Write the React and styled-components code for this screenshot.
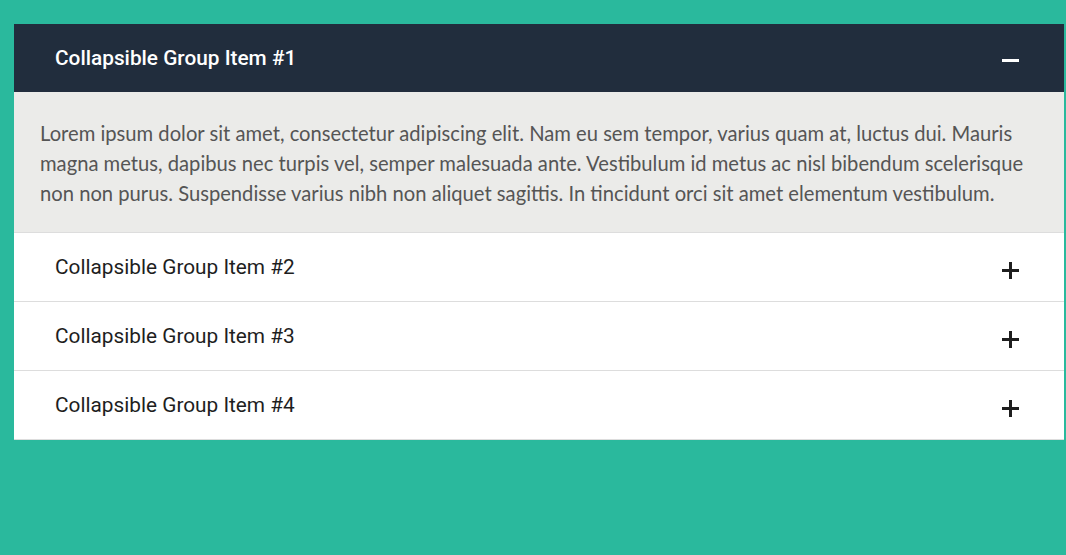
import { useState } from 'react';
import styled, { createGlobalStyle } from 'styled-components';

const GlobalStyle = createGlobalStyle`
    body {
        margin: 0;
        background-color: #2ab99d;
        font-family: Roboto, "Liberation Sans", sans-serif;
    }
`;

const Page = styled.div`
    padding: 24px 2px 0 14px;
`;

const Accordion = styled.div`
    background-color: #fff;
    border-bottom: 1px solid #ddd;
`;

const Item = styled.div`
    & + & {
        border-top: 1px solid #ddd;
    }
`;

const Header = styled.button`
    width: 100%;
    height: 68px;
    display: flex;
    align-items: center;
    justify-content: space-between;
    padding: 0 45px 0 41px;
    border: none;
    cursor: pointer;
    background-color: ${props => (props.open ? '#212d3d' : '#fff')};
    color: ${props => (props.open ? '#fff' : '#1e1e1e')};
    font-family: Roboto, "Liberation Sans", sans-serif;
    font-size: 20.8px;
    font-weight: ${props => (props.open ? 500 : 400)};
    text-align: left;
`;

const Icon = styled.span`
    position: relative;
    width: 17px;
    height: 17px;
    margin-top: ${props => (props.open ? '4px' : '6px')};

    &::before,
    &::after {
        content: '';
        position: absolute;
        background-color: currentColor;
    }

    &::before {
        left: 0;
        right: 0;
        top: 7px;
        height: 3px;
    }

    &::after {
        display: ${props => (props.open ? 'none' : 'block')};
        top: 0;
        bottom: 0;
        left: 7px;
        width: 3px;
    }
`;

const Body = styled.div`
    background-color: #ebebe9;
    padding: 26px 14px 24px 26px;
    font-family: Lato, "Open Sans", sans-serif;
    font-size: 20.2px;
    line-height: 30px;
    color: #555;
`;

const text =
    'Lorem ipsum dolor sit amet, consectetur adipiscing elit. Nam eu sem tempor, varius quam at, luctus dui. Mauris magna metus, dapibus nec turpis vel, semper malesuada ante. Vestibulum id metus ac nisl bibendum scelerisque non non purus. Suspendisse varius nibh non aliquet sagittis. In tincidunt orci sit amet elementum vestibulum.';

const items = [1, 2, 3, 4];

const App = () => {
    const [open, setOpen] = useState(1);

    return (
        <Page>
            <GlobalStyle />
            <Accordion>
                {items.map((n) => (
                    <Item key={n}>
                        <Header open={open === n} onClick={() => setOpen(open === n ? 0 : n)}>
                            Collapsible Group Item #{n}
                            <Icon open={open === n} />
                        </Header>
                        {open === n && <Body>{text}</Body>}
                    </Item>
                ))}
            </Accordion>
        </Page>
    );
};

export default App;
